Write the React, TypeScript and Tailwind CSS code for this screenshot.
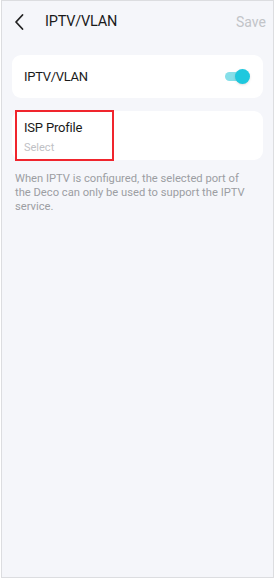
import React, { useState } from 'react';

const App: React.FC = () => {
  const [enabled, setEnabled] = useState(true);

  return (
    <div className="w-[275px] h-[580px] bg-white" style={{ fontFamily: 'Roboto, "Noto Sans", sans-serif' }}>
      <div className="ml-[1px] w-[273px] h-[578px] bg-[#f5f6fa] border border-[#dcdde0] flex flex-col">
        {/* Header */}
        <div className="h-[42px] flex items-center pl-[11px] pr-[7px]">
          <svg width="14" height="18" viewBox="0 0 14 18" className="text-[#222]">
            <path d="M9.5 2 L3 9 L9.5 16" fill="none" stroke="currentColor" strokeWidth="1.8" strokeLinecap="round" strokeLinejoin="round" />
          </svg>
          <h1 className="ml-[18px] text-[14.5px] tracking-[-0.2px] text-[#1a1a1a] flex-1">IPTV/VLAN</h1>
          <button className="text-[14px] text-[#c2c4c8]">Save</button>
        </div>

        {/* IPTV toggle card */}
        <div className="mt-[12px] mx-[10px] h-[43px] bg-white rounded-[9px] flex items-center justify-between pl-[12px] pr-[14px]">
          <span className="text-[13px] tracking-[-0.3px] text-[#1a1a1a]">IPTV/VLAN</span>
          <button onClick={() => setEnabled(!enabled)} className="relative w-[24px] h-[15px]">
            <span className={`absolute left-0 top-[3px] w-[22px] h-[9px] rounded-full ${enabled ? 'bg-[#86dfe9]' : 'bg-[#d0d3d8]'}`} />
            <span className={`absolute top-0 w-[15px] h-[15px] rounded-full shadow-sm ${enabled ? 'left-[10px] bg-[#1ec8de]' : 'left-[-4px] bg-white'}`} />
          </button>
        </div>

        {/* ISP Profile card */}
        <div className="mt-[13px] mx-[10px] h-[49px] bg-white rounded-[9px] relative">
          <div className="absolute left-[3px] top-[-1px] w-[99px] h-[51px] border-2 border-[#f0252d]" />
          <div className="pl-[12px] pt-[8px]">
            <div className="text-[13px] tracking-[-0.2px] text-[#1a1a1a] leading-[18px]">ISP Profile</div>
            <div className="text-[11px] text-[#bfc1c5] leading-[15px] mt-[3px]">Select</div>
          </div>
        </div>

        {/* Note */}
        <p className="mt-[12px] ml-[13px] w-[236px] text-[11.2px] leading-[14px] text-[#9c9ea3]">
          When IPTV is configured, the selected port of the Deco can only be used to support the IPTV service.
        </p>
      </div>
    </div>
  );
};

export default App;
